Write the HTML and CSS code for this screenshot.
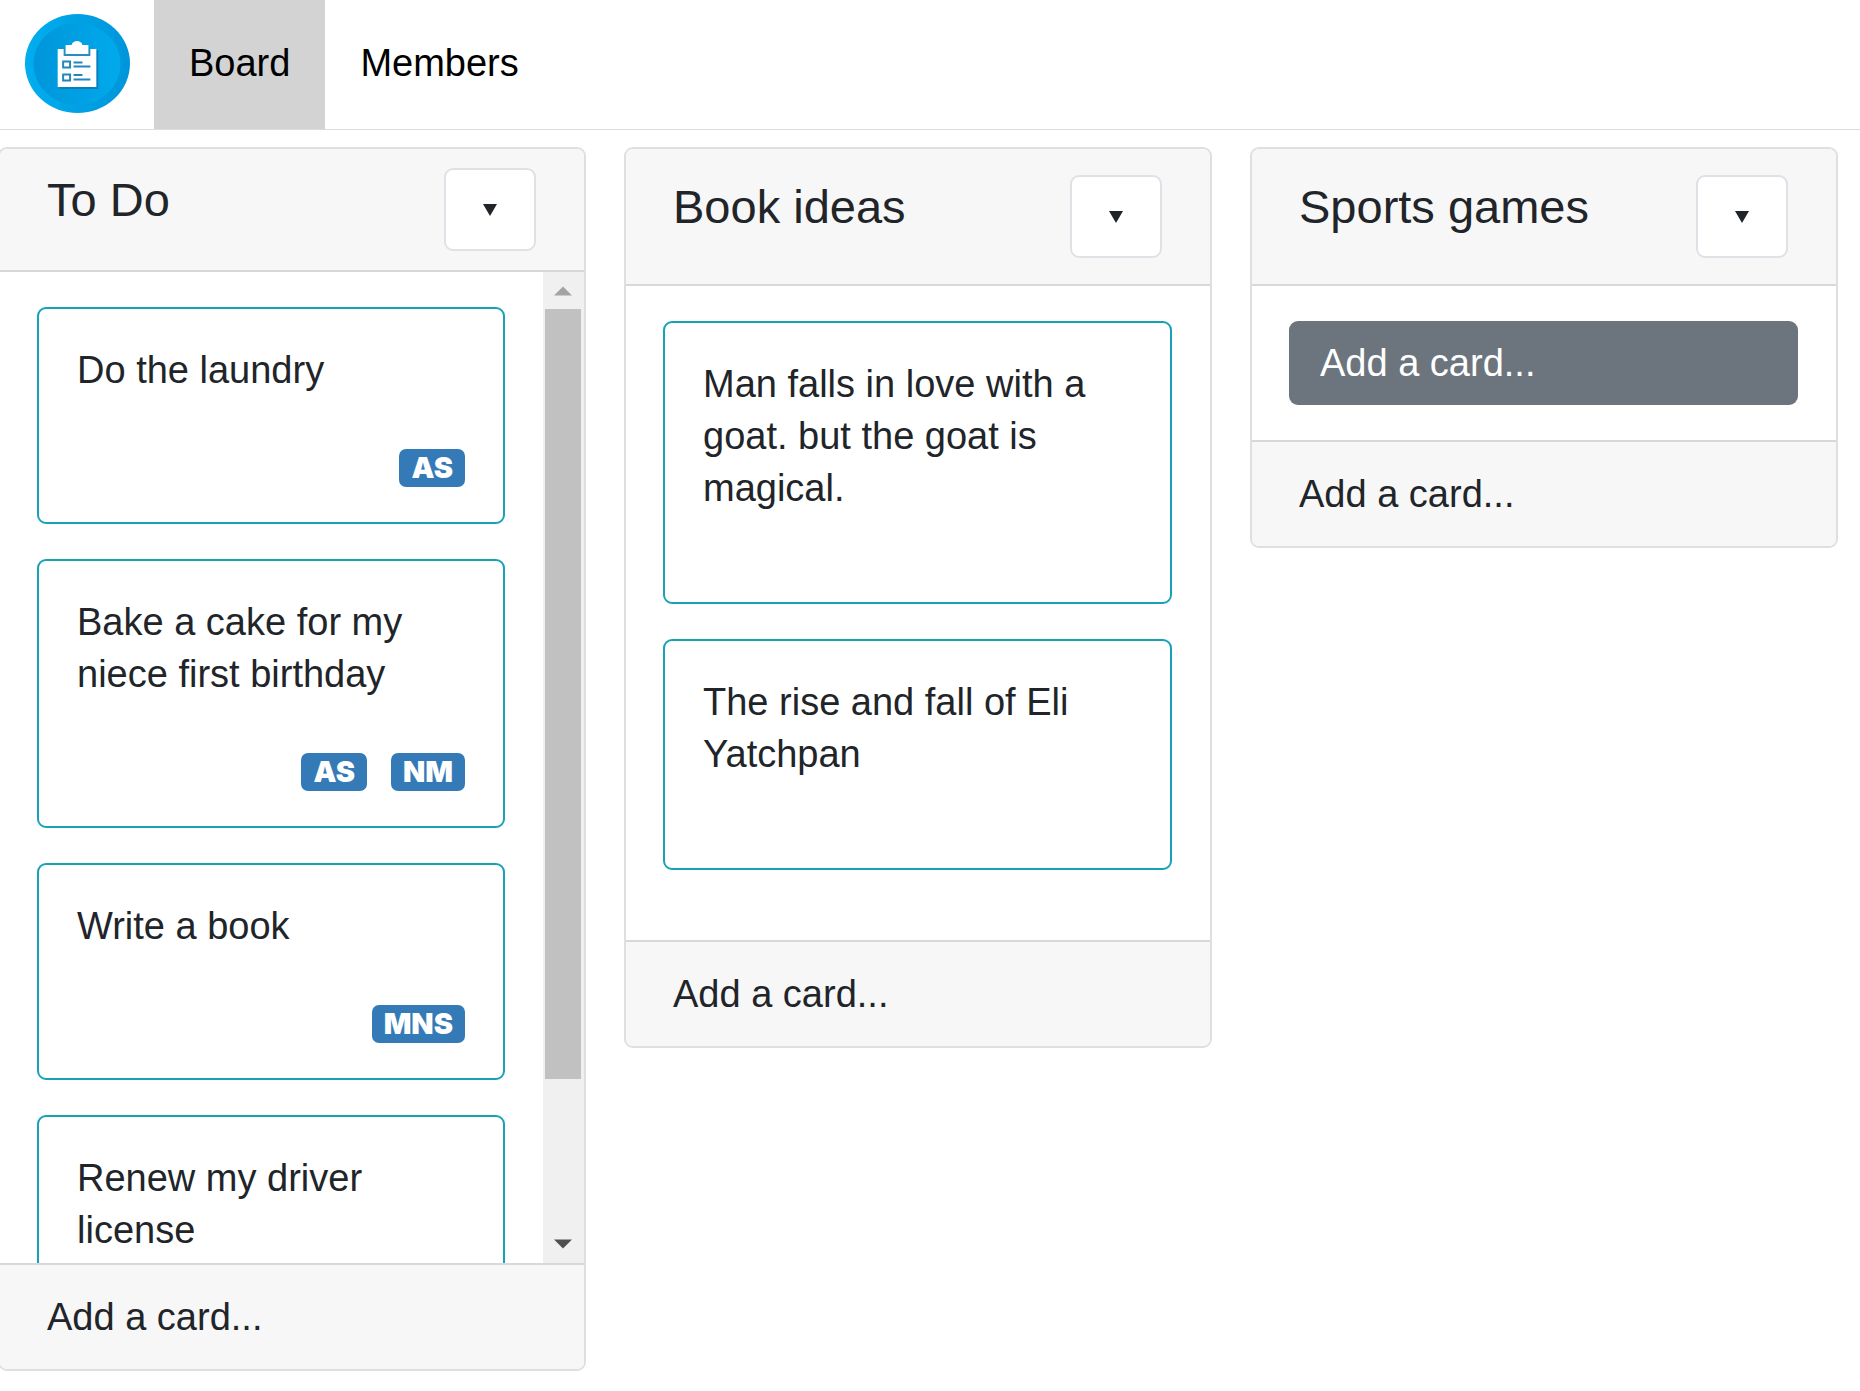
FILE: index.html
```html
<!DOCTYPE html>
<html lang="en">
<head>
<meta charset="utf-8">
<meta name="viewport" content="width=device-width, initial-scale=1">
<title>Board</title>
<link rel="stylesheet" href="styles.css">
</head>
<body>
<header class="topbar">
  <a class="logo" href="#" aria-label="Home">
    <svg width="105" height="99" viewBox="0 0 106 99" preserveAspectRatio="none" aria-hidden="true">
      <defs>
        <linearGradient id="rim"><stop offset="0" stop-color="#00aeef"/><stop offset="1" stop-color="#0095da"/></linearGradient>
        <linearGradient id="face"><stop offset="0" stop-color="#0095da"/><stop offset="1" stop-color="#00aaec"/></linearGradient>
      </defs>
      <ellipse cx="53" cy="49.500" rx="53" ry="49.500" fill="url(#rim)"/>
      <ellipse cx="52.500" cy="50" rx="44" ry="41" fill="url(#face)"/>
      <path d="M35 36h39v39H35z" fill="#0b7fb9"/>
      <path d="M33 35h39v38H33z" fill="#fff"/>
      <path d="M39 35h27v7H39z" fill="#2a8dc0"/>
      <path d="M41 31h6c1-3 3-4 5.500-4s4.500 1 5.500 4h6v9H41z" fill="#fff"/>
      <path d="M38.500 47.500h7v6h-7zM38.500 60.500h7v6h-7z" fill="#fff" stroke="#2286bd" stroke-width="2"/>
      <path d="M49 48.500h9M49 52.500h17M49 61h9M49 65.500h17" stroke="#2286bd" stroke-width="2"/>
    </svg>
  </a>
  <nav class="tabs">
    <a class="tab tab-active" href="#" aria-current="page">Board</a>
    <a class="tab" href="#">Members</a>
  </nav>
</header>

<main class="board">
  <section class="list list-scrolling">
    <header class="list-head">
      <h2 class="list-title">To Do</h2>
      <button class="menu" type="button" aria-label="List menu"><svg width="14" height="12" viewBox="0 0 14 12"><path d="M0 0h14L7 12z" fill="#212529"/></svg></button>
    </header>
    <div class="viewport">
      <div class="cards">
        <article class="card"><p class="card-text">Do the laundry</p><div class="members"><span class="badge">AS</span></div></article>
        <article class="card"><p class="card-text">Bake a cake for my niece first birthday</p><div class="members"><span class="badge">AS</span><span class="badge">NM</span></div></article>
        <article class="card"><p class="card-text">Write a book</p><div class="members"><span class="badge">MNS</span></div></article>
        <article class="card"><p class="card-text">Renew my driver license</p><div class="members"></div></article>
      </div>
      <div class="scrollbar" aria-hidden="true">
        <svg class="arrow" viewBox="0 0 40 37"><path d="M10 24h20L20 14z" fill="#a3a3a3"/></svg>
        <div class="thumb"></div>
        <div class="rest"></div>
        <svg class="arrow" viewBox="0 0 40 37"><path d="M10 13h20L20 23z" fill="#505050"/></svg>
      </div>
    </div>
    <footer class="list-foot"><button class="add" type="button">Add a card...</button></footer>
  </section>

  <section class="list">
    <header class="list-head">
      <h2 class="list-title">Book ideas</h2>
      <button class="menu" type="button" aria-label="List menu"><svg width="14" height="12" viewBox="0 0 14 12"><path d="M0 0h14L7 12z" fill="#212529"/></svg></button>
    </header>
    <div class="cards">
      <article class="card"><p class="card-text">Man falls in love with a goat. but the goat is magical.</p><div class="members"></div></article>
      <article class="card"><p class="card-text">The rise and fall of Eli Yatchpan</p><div class="members"></div></article>
    </div>
    <footer class="list-foot"><button class="add" type="button">Add a card...</button></footer>
  </section>

  <section class="list">
    <header class="list-head">
      <h2 class="list-title">Sports games</h2>
      <button class="menu" type="button" aria-label="List menu"><svg width="14" height="12" viewBox="0 0 14 12"><path d="M0 0h14L7 12z" fill="#212529"/></svg></button>
    </header>
    <div class="cards">
      <button class="add-first" type="button">Add a card...</button>
    </div>
    <footer class="list-foot"><button class="add" type="button">Add a card...</button></footer>
  </section>
</main>
</body>
</html>
```
FILE: styles.css
```css
* {
  box-sizing: border-box;
}

body {
  margin: 0;
  overflow-x: hidden;
  background: #fff;
  color: #212529;
  font-family: "Liberation Sans", Arial, sans-serif;
  font-size: 38px;
  line-height: 52px;
}

button {
  font: inherit;
  color: inherit;
  cursor: pointer;
}

.topbar {
  display: flex;
  height: 130px;
  border-bottom: 1px solid #dcdcdc;
}

.logo {
  display: flex;
  padding: 14px 24px 0 25px;
}

.tabs {
  display: flex;
}

.tab {
  display: flex;
  align-items: center;
  padding: 0 35px 3px;
  color: #000;
  text-decoration: none;
}

.tab-active {
  background: #d3d3d3;
}

/* The board bleeds off the left edge by the width of a list border. */
.board {
  display: grid;
  grid-template-columns: repeat(3, minmax(0, 1fr));
  align-items: start;
  gap: 38px;
  margin: 17px 22px 0 -2px;
}

.list {
  display: flex;
  flex-direction: column;
  max-height: calc(100vh - 167px);
  overflow: hidden;
  border: 2px solid #dfdfdf;
  border-radius: 9px;
  background: #fff;
}

.list-head {
  display: flex;
  flex: none;
  justify-content: space-between;
  align-items: flex-start;
  padding: 26px 48px 26px 47px;
  border-bottom: 2px solid #d8d8d8;
  background: #f7f7f7;
}

.list-scrolling .list-head {
  padding-top: 19px;
  padding-bottom: 19px;
}

.list-title {
  margin: 0;
  font-size: 47px;
  font-weight: 400;
  line-height: 64px;
}

.menu {
  display: flex;
  align-items: center;
  justify-content: center;
  width: 92px;
  height: 83px;
  padding: 0;
  border: 2px solid #dee2e6;
  border-radius: 9px;
  background: #fff;
}

.viewport {
  display: flex;
  flex: 1 1 auto;
  min-height: 0;
}

.cards {
  flex: 1;
  min-width: 0;
  padding: 35px 38px 35px 37px;
  overflow-y: auto;
  scrollbar-width: none;
}

.card {
  margin-bottom: 35px;
  padding: 35px 38px;
  border: 2px solid #17a2b8;
  border-radius: 9px;
  background: #fff;
}

.card-text {
  margin: 0;
}

.members {
  display: flex;
  justify-content: flex-end;
  gap: 24px;
  padding-top: 53px;
}

.badge {
  padding: 0 12px;
  border-radius: 7px;
  background: #337ab7;
  color: #fff;
  font-family: Inter, "Arial Black", sans-serif;
  font-size: 29px;
  font-weight: 900;
  line-height: 38px;
}

.scrollbar {
  display: flex;
  flex: none;
  flex-direction: column;
  width: 41px;
  padding: 0 3px 0 2px;
  background: #f0f0f0;
}

.arrow {
  flex: none;
  height: 37px;
}

.thumb {
  flex: 21;
  background: #c1c1c1;
}

.rest {
  flex: 4;
}

.list-foot {
  flex: none;
  padding: 26px 47px;
  border-top: 2px solid #d8d8d8;
  background: #f7f7f7;
}

.add {
  display: block;
  width: 100%;
  padding: 0;
  border: 0;
  background: none;
  text-align: left;
}

.add-first {
  display: block;
  width: 100%;
  padding: 16px 31px;
  border: 0;
  border-radius: 9px;
  background: #6c757d;
  color: #fff;
  text-align: left;
}
```
